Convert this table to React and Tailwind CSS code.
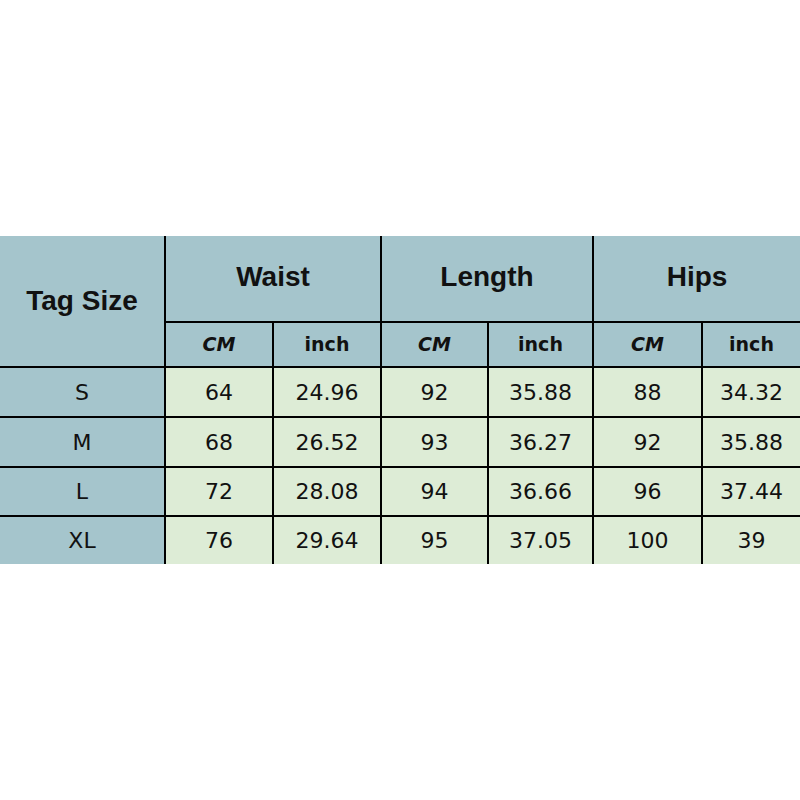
const rows = [
	["S", "64", "24.96", "92", "35.88", "88", "34.32"],
	["M", "68", "26.52", "93", "36.27", "92", "35.88"],
	["L", "72", "28.08", "94", "36.66", "96", "37.44"],
	["XL", "76", "29.64", "95", "37.05", "100", "39"],
];

const groups = ["Waist", "Length", "Hips"];

export default function App() {
	return (
		<div className="min-h-[800px] w-[800px] bg-white flex flex-col justify-center">
			{/* size chart */}
			<div className="grid grid-cols-[164px_106px_106px_105px_103px_107px_97px] grid-rows-[85px_43px_48px_48px_47px_47px] gap-[2px] bg-black text-[#111]">
				<div className="row-span-2 bg-[#a5c5cc] flex items-center justify-center font-['Liberation_Sans',sans-serif] font-bold text-[28px]">
					Tag Size
				</div>
				{groups.map((g) => (
					<div
						key={g}
						className="col-span-2 bg-[#a5c5cc] flex items-center justify-center pb-[3px] font-['Liberation_Sans',sans-serif] font-bold text-[28px]"
					>
						{g}
					</div>
				))}
				{groups.map((g) => [
					<div
						key={g + "cm"}
						className="bg-[#a5c5cc] flex items-center justify-center font-['DejaVu_Sans',sans-serif] font-bold italic text-[19px]"
					>
						CM
					</div>,
					<div
						key={g + "in"}
						className="bg-[#a5c5cc] flex items-center justify-center font-['DejaVu_Sans',sans-serif] font-bold text-[19px]"
					>
						inch
					</div>,
				])}
				{rows.map((r) =>
					r.map((c, i) => (
						<div
							key={r[0] + i}
							className={`flex items-center justify-center font-['DejaVu_Sans',sans-serif] text-[22px] ${
								i === 0 ? "bg-[#a5c5cc]" : "bg-[#ddecd6]"
							}`}
						>
							{c}
						</div>
					))
				)}
			</div>
		</div>
	);
}
